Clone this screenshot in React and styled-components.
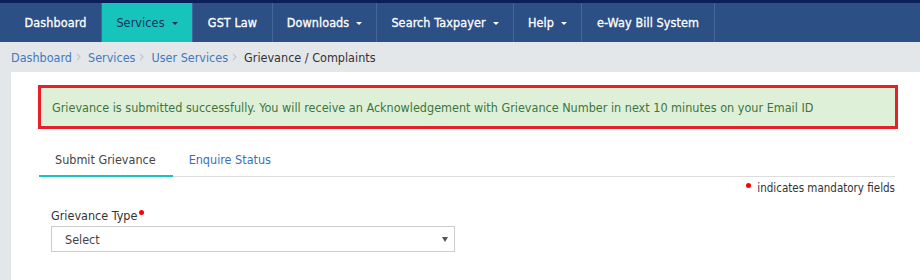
import React from 'react';
import styled, { createGlobalStyle } from 'styled-components';

const FONT = `Tahoma, "DejaVu Sans Condensed", "DejaVu Sans", sans-serif`;

const GlobalStyle = createGlobalStyle`
  body {
    margin: 0;
    background-color: #e4e7ea;
    font-family: ${FONT};
    font-size: 12.5px;
    color: #333333;
  }
`;

const navItems = [
  { label: 'Dashboard', width: 92 },
  { label: 'Services', width: 91, caret: true, active: true },
  { label: 'GST Law', width: 80 },
  { label: 'Downloads', width: 104, caret: true },
  { label: 'Search Taxpayer', width: 137, caret: true },
  { label: 'Help', width: 68, caret: true },
  { label: 'e-Way Bill System', width: 133 },
];

const crumbs = ['Dashboard', 'Services', 'User Services'];

const App = () => {
  return (
    <>
      <GlobalStyle />
      <TopNav>
        {navItems.map((item) => (
          <NavItem key={item.label} $width={item.width} $active={item.active}>
            {item.label}
            {item.caret && <Caret />}
          </NavItem>
        ))}
      </TopNav>

      <Breadcrumb>
        {crumbs.map((c) => (
          <React.Fragment key={c}>
            <CrumbLink>{c}</CrumbLink>
            <CrumbSep width='5' height='8' viewBox='0 0 5 8'>
              <path d='M1 1l3 3-3 3' fill='none' stroke='#c2c7cc' strokeWidth='1.2' />
            </CrumbSep>
          </React.Fragment>
        ))}
        <CrumbCurrent>Grievance / Complaints</CrumbCurrent>
      </Breadcrumb>

      <Card>
        <Alert>
          Grievance is submitted successfully. You will receive an Acknowledgement with Grievance
          Number in next 10 minutes on your Email ID
        </Alert>

        <Tabs>
          <Tab $active>Submit Grievance</Tab>
          <Tab>Enquire Status</Tab>
        </Tabs>

        <Mandatory>
          <Dot $gap={6} />
          indicates mandatory fields
        </Mandatory>

        <FormGroup>
          <Label>
            Grievance Type
            <Dot $gap={0} />
          </Label>
          <SelectBox>
            <span>Select</span>
            <SelectArrow />
          </SelectBox>
        </FormGroup>
      </Card>
    </>
  );
};

export default App;

// 상단 메뉴
const TopNav = styled.nav`
  display: flex;
  height: 39px;
  padding-left: 10px;
  border-top: 3px solid #0d1f5a;
  background-color: #2c4f85;
`;

const NavItem = styled.div`
  box-sizing: border-box;
  width: ${(p) => p.$width}px;
  display: flex;
  align-items: center;
  justify-content: center;
  border-right: 1px solid #46669a;
  background-color: ${(p) => (p.$active ? '#17c4bb' : 'transparent')};
  color: ${(p) => (p.$active ? '#1b2f5e' : '#ffffff')};
  font-size: 12.5px;
  letter-spacing: 0.1px;
  -webkit-text-stroke: ${(p) => (p.$active ? '0' : '0.3px')} #ffffff;
`;

const Caret = styled.span`
  display: inline-block;
  margin-left: 7px;
  margin-top: 2px;
  border-left: 3px solid transparent;
  border-right: 3px solid transparent;
  border-top: 3px solid currentColor;
`;

// 경로
const Breadcrumb = styled.div`
  display: flex;
  align-items: center;
  height: 30px;
  padding-left: 11px;
  font-size: 12.5px;
`;

const CrumbLink = styled.span`
  color: #4279bd;
`;

const CrumbSep = styled.svg`
  margin: 0 7px 0 4px;
`;

const CrumbCurrent = styled.span`
  color: #333333;
`;

// 본문
const Card = styled.div`
  margin-left: 11px;
  min-height: 208px;
  padding: 13px 25px 0 28px;
  background-color: #ffffff;
`;

const Alert = styled.div`
  display: flex;
  align-items: center;
  height: 38px;
  margin: 0 -3px 0 -1px;
  padding-left: 11px;
  border: 3px solid #e5202a;
  background-color: #dff0d8;
  color: #3c763d;
  font-size: 12.5px;
`;

const Tabs = styled.div`
  display: flex;
  margin-top: 13px;
  border-bottom: 1px solid #dddddd;
`;

const Tab = styled.div`
  padding: 10px 17px 8px 16px;
  line-height: 15px;
  margin-bottom: -1px;
  border-bottom: 2px solid ${(p) => (p.$active ? '#17c4bb' : 'transparent')};
  color: ${(p) => (p.$active ? '#444444' : '#3a70ba')};
  font-size: 12.5px;
`;

const Mandatory = styled.div`
  display: flex;
  justify-content: flex-end;
  align-items: flex-start;
  margin-top: 4px;
  line-height: 15px;
  font-size: 11.5px;
  color: #333333;
`;

const Dot = styled.span`
  display: inline-block;
  width: 5px;
  height: 5px;
  margin: 2px ${(p) => p.$gap}px 0 2px;
  border-radius: 50%;
  background-color: #ff0000;
`;

const FormGroup = styled.div`
  padding-left: 12px;
  margin-top: 12px;
`;

const Label = styled.div`
  display: flex;
  align-items: flex-start;
  line-height: 15px;
  font-size: 12.5px;
  color: #333333;
`;

const SelectBox = styled.div`
  box-sizing: border-box;
  display: flex;
  align-items: center;
  justify-content: space-between;
  width: 404px;
  height: 26px;
  margin-top: 3px;
  padding: 0 6px 0 13px;
  border: 1px solid #cccccc;
  color: #444444;
  font-size: 12.5px;
`;

const SelectArrow = styled.span`
  border-left: 3px solid transparent;
  border-right: 3px solid transparent;
  border-top: 5px solid #555555;
`;
